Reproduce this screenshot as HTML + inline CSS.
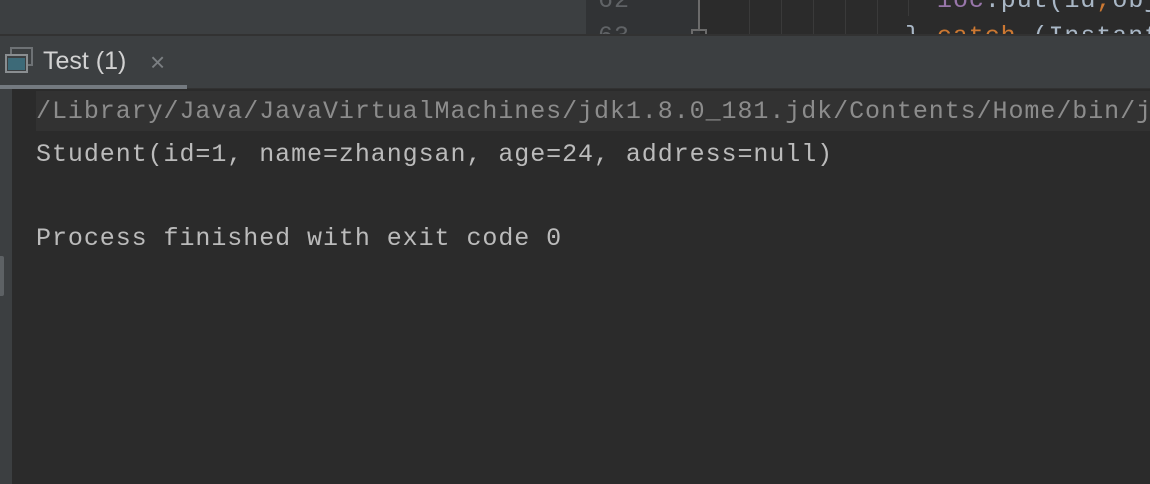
<!DOCTYPE html>
<html><head><style>
*{margin:0;padding:0;box-sizing:border-box}
html,body{width:1150px;height:484px;overflow:hidden}
body{background:#2b2b2b;position:relative;font-family:"Liberation Mono",monospace}
.a{position:absolute}
.mono{font-family:"Liberation Mono",monospace;font-size:25px;letter-spacing:0.94px;white-space:pre;color:#a9b7c6}
#w{position:absolute;left:0;top:0;width:1150px;height:484px;overflow:hidden}
</style></head><body><div id="w">
<div class="a" style="left:0;top:0;width:586px;height:35px;background:#3c3f41"></div>
<div class="a" style="left:586px;top:0;width:114px;height:35px;background:#313335"></div>
<div class="a" style="left:700px;top:0;width:450px;height:35px;background:#2b2b2b;overflow:hidden">
<div class="a mono" style="left:237px;top:-14px"><span style="color:#9876aa">ioc</span>.put(id<span style="color:#cc7832">,</span>obj</div>
<div class="a mono" style="left:205px;top:22px">} <span style="color:#cc7832">catch</span> (Instant</div>
</div>
<div class="a" style="left:586px;top:0;width:113px;height:35px;overflow:hidden">
<div class="a mono" style="left:12px;top:-14px;color:#606366">62</div>
<div class="a mono" style="left:12px;top:22px;color:#606366">63</div>
</div>
<div class="a" style="left:698px;top:0;width:2px;height:31px;background:#6b6b6b"></div>
<div class="a" style="left:691px;top:29px;width:16px;height:6px;border:2px solid #6b6b6b;border-bottom:none"></div>
<div class="a" style="left:749px;top:0;width:1px;height:35px;background:#3a3a3a"></div>
<div class="a" style="left:781px;top:0;width:1px;height:35px;background:#3a3a3a"></div>
<div class="a" style="left:813px;top:0;width:1px;height:35px;background:#3a3a3a"></div>
<div class="a" style="left:845px;top:0;width:1px;height:35px;background:#3a3a3a"></div>
<div class="a" style="left:877px;top:0;width:1px;height:35px;background:#3a3a3a"></div>
<div class="a" style="left:908px;top:0;width:1px;height:16px;background:#3a3a3a"></div>
<div class="a" style="left:0;top:34px;width:1150px;height:2px;background:#323232"></div>
<div class="a" style="left:0;top:36px;width:1150px;height:53px;background:#3c3f41"></div>
<svg class="a" style="left:4px;top:46px" width="30" height="30" viewBox="0 0 30 30">
<rect x="7" y="2" width="21" height="17" fill="none" stroke="#6e7275" stroke-width="2"/>
<rect x="2" y="9" width="21" height="17" fill="#3c3f41" stroke="#8a8e91" stroke-width="2"/>
<rect x="4" y="12" width="17" height="12" fill="#3d6a78"/>
</svg>
<div class="a" style="left:43px;top:47px;font-family:'Liberation Sans',sans-serif;font-size:25px;color:#d2d2d2">Test (1)</div>
<div class="a" style="left:150px;top:47px;font-family:'Liberation Sans',sans-serif;font-size:26px;color:#7b7f82">×</div>
<div class="a" style="left:0;top:85px;width:187px;height:4px;background:#747a80"></div>
<div class="a" style="left:187px;top:88px;width:963px;height:1px;background:#323232"></div>
<div class="a" style="left:0;top:89px;width:12px;height:395px;background:#3c3f41"></div>
<div class="a" style="left:0;top:256px;width:4px;height:40px;background:#5d6164;border-radius:0 2px 2px 0"></div>
<div class="a" style="left:36px;top:91px;width:1114px;height:40px;background:#323232;overflow:hidden">
<div class="a mono" style="left:0;top:6px;color:#8c8c8c">/Library/Java/JavaVirtualMachines/jdk1.8.0_181.jdk/Contents/Home/bin/java</div>
</div>
<div class="a mono" style="left:36px;top:140px;color:#bbbbbb">Student(id=1, name=zhangsan, age=24, address=null)</div>
<div class="a mono" style="left:36px;top:224px;color:#bbbbbb">Process finished with exit code 0</div>
</div></body></html>
